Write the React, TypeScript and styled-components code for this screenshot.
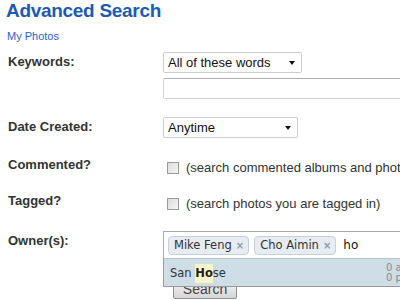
import styled, {createGlobalStyle} from "styled-components";

const GlobalStyle = createGlobalStyle`
  html, body {
    margin: 0;
    padding: 0;
    background: #ffffff;
    overflow: hidden;
  }

  body {
    font-family: "Liberation Sans", Arial, sans-serif;
    color: #333333;
  }
`;

const Page = styled.div`
  width: 520px;
  padding-left: 6px;
`;

const Title = styled.h1`
  margin: 0;
  font-size: 19px;
  line-height: 22px;
  letter-spacing: -0.3px;
  font-weight: bold;
  color: #1d5bb1;
`;

const Crumb = styled.a`
  display: block;
  margin: 8px 0 0 1px;
  font-size: 11px;
  line-height: 13px;
  color: #2d62c4;
  text-decoration: none;
`;

const Form = styled.div`
  padding-left: 2px;
`;

const Row = styled.div<{ $top: number }>`
  display: flex;
  align-items: flex-start;
  margin-top: ${p => p.$top}px;
`;

const Label = styled.div`
  width: 155px;
  flex: none;
  padding-top: 2px;
  font-size: 13px;
  line-height: 16px;
  font-weight: bold;
  color: #333333;
`;

const Controls = styled.div`
  display: flex;
  flex-direction: column;
  gap: 5px;
`;

const Select = styled.div<{ $width: number }>`
  position: relative;
  box-sizing: border-box;
  width: ${p => p.$width}px;
  height: 21px;
  padding: 0 0 0 4px;
  border: 1px solid #cccccc;
  border-radius: 2px;
  background: #ffffff;
  font-size: 13px;
  line-height: 19px;
  color: #111111;

  &::after {
    content: "";
    position: absolute;
    right: 6px;
    top: 8px;
    border-left: 3.5px solid transparent;
    border-right: 3.5px solid transparent;
    border-top: 4px solid #111111;
  }
`;

const TextInput = styled.div`
  box-sizing: border-box;
  width: 260px;
  height: 21px;
  border: 1px solid #d4d4d4;
  border-top-color: #b0b0b0;
  border-radius: 2px;
  background: #ffffff;
`;

const CheckLine = styled.label`
  display: flex;
  align-items: center;
  gap: 7px;
  padding: 7px 0 0 4px;
  font-size: 13px;
  line-height: 12px;
  color: #333333;
  white-space: nowrap;
`;

const Box = styled.span`
  box-sizing: border-box;
  width: 12px;
  height: 12px;
  flex: none;
  border: 1px solid #9a9a9a;
  background: linear-gradient(135deg, #dcdcdc, #f6f6f6);
`;

const TokenField = styled.div`
  position: relative;
  box-sizing: border-box;
  width: 260px;
  height: 27px;
  display: flex;
  align-items: center;
  gap: 5px;
  padding: 0 0 0 4px;
  border: 1px solid #a8a8a8;
  border-bottom: none;
  background: #ffffff;
  font-family: "DejaVu Sans", Verdana, sans-serif;
`;

const Chip = styled.span`
  display: inline-flex;
  align-items: center;
  gap: 4px;
  box-sizing: border-box;
  height: 19px;
  padding: 0 4px 0 5px;
  border: 1px solid #c6d0da;
  border-radius: 4px;
  background: #e6ecf2;
  font-size: 11.5px;
  color: #333333;
`;

const ChipX = styled.span`
  font-size: 10px;
  font-weight: bold;
  color: #8b98a6;
`;

const Typed = styled.span`
  margin-left: 2px;
  font-size: 12px;
  color: #111111;
`;

const Suggest = styled.div`
  position: absolute;
  top: 100%;
  left: -1px;
  right: -1px;
  box-sizing: border-box;
  height: 29px;
  display: flex;
  align-items: center;
  justify-content: space-between;
  padding: 0 0 0 6px;
  border: 1px solid #9a9a9a;
  border-top: 1px solid #b8c4cc;
  background: #cfdde7;
  font-size: 11.5px;
  color: #333333;
  z-index: 2;
`;

const Match = styled.b`
  background: #f8f5c8;
  padding: 2px 0 3px;
  color: #222222;
`;

const Stats = styled.div`
  width: 36px;
  flex: none;
  white-space: nowrap;
  overflow: hidden;
  font-size: 10px;
  line-height: 10px;
  color: #8a8a8a;
`;

const Button = styled.button`
  margin: 20px 0 0 165px;
  box-sizing: border-box;
  width: 64px;
  height: 21px;
  padding: 0;
  border: 1px solid #8f8f8f;
  border-radius: 2px;
  background: linear-gradient(#f7f7f7, #d6d6d6);
  font-family: "Liberation Sans", Arial, sans-serif;
  font-size: 14px;
  color: #444444;
`;

export default function App() {
    return (
        <Page>
            <GlobalStyle/>
            <Title>Advanced Search</Title>
            <Crumb href="#">My Photos</Crumb>
            <Form>
                <Row $top={9}>
                    <Label>Keywords:</Label>
                    <Controls>
                        <Select $width={139}>All of these words</Select>
                        <TextInput/>
                    </Controls>
                </Row>
                <Row $top={18}>
                    <Label>Date Created:</Label>
                    <Select $width={135}>Anytime</Select>
                </Row>
                <Row $top={17}>
                    <Label>Commented?</Label>
                    <CheckLine><Box/>(search commented albums and photos)</CheckLine>
                </Row>
                <Row $top={17}>
                    <Label>Tagged?</Label>
                    <CheckLine><Box/>(search photos you are tagged in)</CheckLine>
                </Row>
                <Row $top={21}>
                    <Label>Owner(s):</Label>
                    <TokenField>
                        <Chip>Mike Feng <ChipX>×</ChipX></Chip>
                        <Chip>Cho Aimin <ChipX>×</ChipX></Chip>
                        <Typed>ho</Typed>
                        <Suggest>
                            <span>San <Match>Ho</Match>se</span>
                            <Stats>0 albums<br/>0 photos</Stats>
                        </Suggest>
                    </TokenField>
                </Row>
                <Button>Search</Button>
            </Form>
        </Page>
    );
}
